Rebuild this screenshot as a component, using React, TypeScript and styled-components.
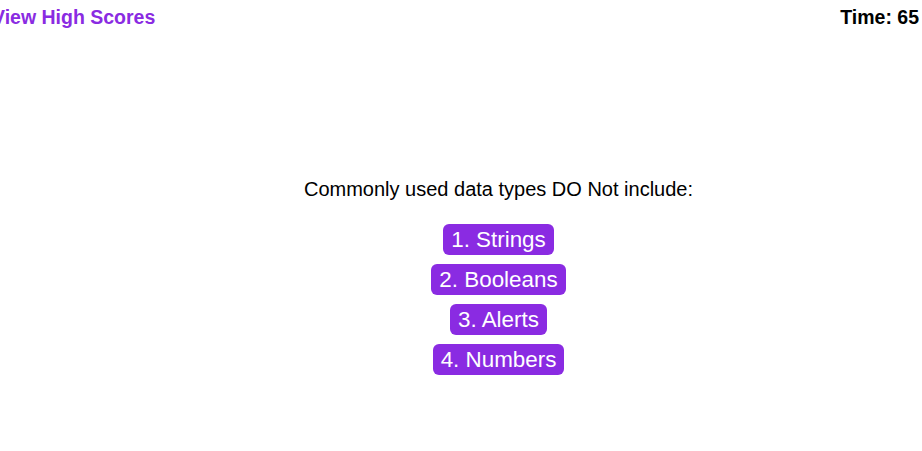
import React from "react";
import styled, { createGlobalStyle } from "styled-components";

const Global = createGlobalStyle`
  html, body { margin: 0; padding: 0; background: #ffffff; overflow: hidden; }
  body { font-family: "Liberation Sans", Arial, sans-serif; }
`;

const Page = styled.div`
  width: 922px;
  height: 451px;
  display: flex;
  flex-direction: column;
`;

const Header = styled.header`
  display: flex;
  justify-content: space-between;
  align-items: center;
  margin: 0 3px 0 -8px;
  padding-top: 6px;
  font-size: 19.5px;
  line-height: 23px;
  font-weight: bold;
`;

const ScoresLink = styled.a`
  color: #8a2be2;
  text-decoration: none;
  cursor: pointer;
`;

const Timer = styled.span`
  color: #000;
`;

const Main = styled.main`
  display: flex;
  flex-direction: column;
  align-items: center;
  padding: 149px 0 0 75px;
`;

const Question = styled.h2`
  margin: 0 0 23px;
  font-size: 20px;
  font-weight: normal;
  color: #000;
`;

const Choices = styled.div`
  display: flex;
  flex-direction: column;
  align-items: center;
  gap: 9px;
`;

const Choice = styled.button`
  font-family: "Liberation Sans", Arial, sans-serif;
  font-size: 22.4px;
  line-height: 25px;
  color: #fff;
  background: #8a2be2;
  border: none;
  border-radius: 6px;
  padding: 3px 8px;
  cursor: pointer;
`;

const choices = ["1. Strings", "2. Booleans", "3. Alerts", "4. Numbers"];

export default function App() {
  return (
    <Page>
      <Global />
      <Header>
        <ScoresLink>View High Scores</ScoresLink>
        <Timer>Time: 65</Timer>
      </Header>
      <Main>
        <Question>Commonly used data types DO Not include:</Question>
        <Choices>
          {choices.map((c) => (
            <Choice key={c}>{c}</Choice>
          ))}
        </Choices>
      </Main>
    </Page>
  );
}
